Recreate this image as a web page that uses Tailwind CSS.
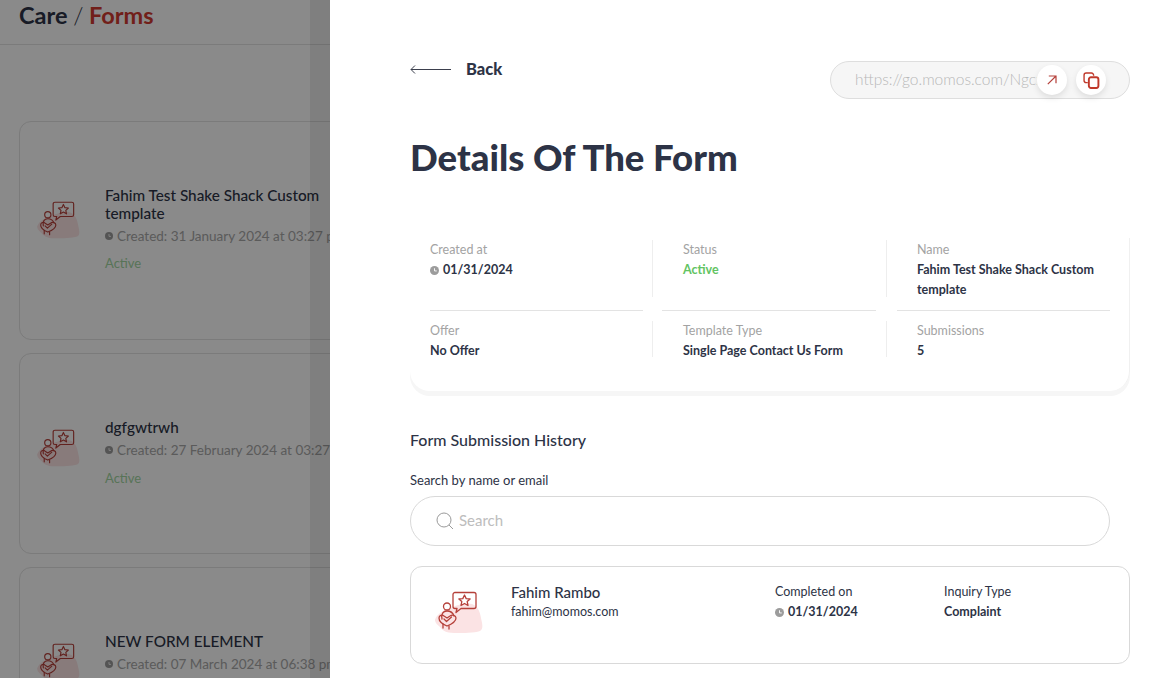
<!DOCTYPE html>
<html lang="en">
<head>
    <meta charset="UTF-8">
    <meta name="viewport" content="width=device-width, initial-scale=1.0">
    <title>Care / Forms</title>
    <script src="https://cdn.jsdelivr.net/npm/@tailwindcss/browser@4"></script>
</head>
<body class="h-[678px] w-[1162px] overflow-hidden bg-white font-['Lato',sans-serif] text-[#2d3346]">
    <svg class="hidden">
        <symbol id="form-icon" viewBox="0 0 50 46">
            <path d="M1 30c1-4 5-8 12-11 8-3 18-7 25-5 6 2 8 8 9 14 1 5 3 11-1 13-6 2-16 2-26 2-8 0-12-3-14-6-2-2-5-4-5-7z" fill="#fbe3e4"/>
            <g fill="none" stroke="#b5403a" stroke-width="1.300" stroke-linejoin="round" stroke-linecap="round">
                <path d="M21 2.500h19a2 2 0 0 1 2 2v12a2 2 0 0 1-2 2H27l-5 4 1-4h-2a2 2 0 0 1-2-2v-12a2 2 0 0 1 2-2z"/>
                <path d="M30.500 5l1.700 3.600 3.900.4-2.900 2.600.8 3.900-3.500-2-3.500 2 .8-3.900-2.900-2.600 3.900-.4z"/>
                <circle cx="13" cy="16.500" r="3.500"/>
                <path d="M8 29c-1-5 1-8 5-8s6 2 7 5"/>
                <path d="M13 36c-5-2-8-5-8-8 0-2.500 3-4 5-2l3 2 3-2c2-1.500 6-1 6 2 0 3-4 6-9 8z"/>
                <path d="M10 29l2.500 2.500 5-4.500"/>
                <path d="M9 34v4M15 36v3"/>
            </g>
        </symbol>
        <symbol id="clock" viewBox="0 0 10 10">
            <circle cx="5" cy="5" r="5" fill="#9c9c9c"/>
            <path d="M5 2.500V5.500H7.500" fill="none" stroke="#ffffff" stroke-width="1"/>
        </symbol>
    </svg>

    <div class="flex h-full">
        <!-- Forms list behind the overlay -->
        <div class="relative h-full w-[330px] shrink-0 overflow-hidden bg-white">
            <div class="flex h-[45px] w-[500px] items-start border-b border-[#e3e3e3] pl-[19px]">
                <h1 class="text-[23.5px] leading-[31px] font-bold text-[#2d3346]">Care <span class="font-light">/</span> <span class="text-[#d13a30]">Forms</span></h1>
            </div>
            <div class="ml-[19px] mt-[76px] flex w-[500px] flex-col gap-[13px]">
                <div class="flex h-[219px] items-center rounded-xl border border-[#e3e3e3] pl-[16px]">
                    <svg class="mb-[3px] h-[41px] w-[45px] shrink-0 self-center -translate-y-[9px]"><use href="#form-icon"/></svg>
                    <div class="mb-[3px] ml-[24px] w-[222px] shrink-0">
                        <p class="text-[15.3px] leading-[18px] font-medium text-[#2d3346]">Fahim Test Shake Shack Custom template</p>
                        <p class="mt-[5px] flex items-center gap-1 whitespace-nowrap text-[13.500px] leading-[18px] text-[#a8a8a8]"><svg class="size-2 shrink-0"><use href="#clock"/></svg>Created: 31 January 2024 at 03:27 pm</p>
                        <p class="mt-[9px] text-[13px] leading-[18px] text-[#a2d6a2]">Active</p>
                    </div>
                </div>
                <div class="flex h-[201px] items-center rounded-xl border border-[#e3e3e3] pl-[16px]">
                    <svg class="mb-[3px] h-[41px] w-[45px] shrink-0 -translate-y-[4px]"><use href="#form-icon"/></svg>
                    <div class="mb-[3px] ml-[24px] w-[222px] shrink-0">
                        <p class="text-[15.3px] leading-[18px] font-medium text-[#2d3346]">dgfgwtrwh</p>
                        <p class="mt-[5px] flex items-center gap-1 whitespace-nowrap text-[13.500px] leading-[18px] text-[#a8a8a8]"><svg class="size-2 shrink-0"><use href="#clock"/></svg>Created: 27 February 2024 at 03:27 pm</p>
                        <p class="mt-[10px] text-[13px] leading-[18px] text-[#a2d6a2]">Active</p>
                    </div>
                </div>
                <div class="flex h-[201px] items-center rounded-xl border border-[#e3e3e3] pl-[16px]">
                    <svg class="mb-[3px] h-[41px] w-[45px] shrink-0 -translate-y-[4px]"><use href="#form-icon"/></svg>
                    <div class="mb-[3px] ml-[24px] w-[222px] shrink-0">
                        <p class="text-[15.3px] leading-[18px] font-medium text-[#2d3346]">NEW FORM ELEMENT</p>
                        <p class="mt-[5px] flex items-center gap-1 whitespace-nowrap text-[13.500px] leading-[18px] text-[#a8a8a8]"><svg class="size-2 shrink-0"><use href="#clock"/></svg>Created: 07 March 2024 at 06:38 pm</p>
                        <p class="mt-[10px] text-[13px] leading-[18px] text-[#a2d6a2]">Active</p>
                    </div>
                </div>
            </div>
            <!-- Modal backdrop -->
            <div class="absolute inset-0 bg-black/46"></div>
            <div class="absolute inset-y-0 right-0 w-5 bg-black/8"></div>
        </div>

        <!-- Details panel -->
        <div class="h-full flex-1 overflow-hidden pl-20 pr-8">
            <div class="flex items-start justify-between pt-[61px]">
                <div class="flex items-center">
                    <svg class="h-3 w-[41px]" viewBox="0 0 41 12" fill="none" stroke="#3b3f4d" stroke-width="1"><path d="M41 6.500H1M5 2.500 1 6.500l4 4"/></svg>
                    <span class="ml-[15px] text-[16.500px] leading-4 font-black">Back</span>
                </div>
                <div class="flex h-[38px] w-[300px] items-center rounded-full border border-[#dedede] bg-[#f6f6f6] pl-6 pr-[23px]">
                    <span class="w-[182px] overflow-hidden whitespace-nowrap text-[15.500px] font-light text-[#b8b8b8]">https://go.momos.com/NgcxQd</span>
                    <button class="flex size-[30px] items-center justify-center rounded-full bg-white shadow-[0_3px_6px_rgba(0,0,0,0.1)]">
                        <svg class="size-[10px]" viewBox="0 0 10 10" fill="none" stroke="#b5403a" stroke-width="1.200"><path d="M.8 9.200 9 1M1.800 1H9v7.200"/></svg>
                    </button>
                    <button class="ml-[9px] flex size-[30px] items-center justify-center rounded-full bg-white shadow-[0_3px_6px_rgba(0,0,0,0.1)]">
                        <svg class="size-[17px]" viewBox="0 0 16 16" fill="none" stroke="#c0392b" stroke-width="1.300"><path d="M10 3.500V3a2 2 0 0 0-2-2H3a2 2 0 0 0-2 2v5a2 2 0 0 0 2 2h1.500"/><rect x="5.500" y="5" width="9" height="10" rx="2" stroke-width="1.800"/></svg>
                    </button>
                </div>
            </div>

            <h2 class="mt-[39px] text-[36.500px] leading-[38px] font-black">Details Of The Form</h2>

            <!-- Form info -->
            <div class="mt-[62px] h-[153px] rounded-b-[20px] border-r border-[#f0f0f0] pt-[2px] shadow-[0_5px_0_#f6f6f6]">
                <div class="grid grid-cols-[243px_234px_243px] text-[12.500px] leading-5">
                    <div class="h-[57px] border-r border-[#eeeeee] pl-5">
                        <p class="text-[#a3a3a3]">Created at</p>
                        <p class="flex items-center gap-1 font-bold"><svg class="size-[9px] shrink-0"><use href="#clock"/></svg>01/31/2024</p>
                    </div>
                    <div class="h-[57px] border-r border-[#eeeeee] pl-[30px]">
                        <p class="text-[#a3a3a3]">Status</p>
                        <p class="font-bold text-[#62c462]">Active</p>
                    </div>
                    <div class="h-[57px] pl-[30px] pr-3">
                        <p class="text-[#a3a3a3]">Name</p>
                        <p class="font-bold">Fahim Test Shake Shack Custom template</p>
                    </div>
                    <div class="col-span-3 flex h-[24px] items-center pl-5 pt-[2px]">
                        <div class="h-px w-[213px] bg-[#e3e3e3]"></div>
                        <div class="ml-[19px] h-px w-[214px] bg-[#e3e3e3]"></div>
                        <div class="ml-[21px] h-px w-[213px] bg-[#e3e3e3]"></div>
                    </div>
                    <div class="h-[36px] border-r border-[#eeeeee] pl-5">
                        <p class="text-[#a3a3a3]">Offer</p>
                        <p class="font-bold">No Offer</p>
                    </div>
                    <div class="h-[36px] border-r border-[#eeeeee] pl-[30px]">
                        <p class="text-[#a3a3a3]">Template Type</p>
                        <p class="font-bold">Single Page Contact Us Form</p>
                    </div>
                    <div class="h-[36px] pl-[30px]">
                        <p class="text-[#a3a3a3]">Submissions</p>
                        <p class="font-bold">5</p>
                    </div>
                </div>
            </div>

            <!-- Submission history -->
            <h3 class="mt-[38px] text-base leading-[22px] font-medium">Form Submission History</h3>
            <p class="mt-[19px] text-[13px] leading-[20px]">Search by name or email</p>
            <div class="mt-[6px] flex h-[50px] w-[700px] items-center rounded-full border border-[#d9d9d9] pl-[25px]">
                <svg class="size-[18px]" viewBox="0 0 18 18" fill="none" stroke="#9a9a9a" stroke-width="1"><circle cx="8" cy="8" r="7"/><path d="m13 13 4 4"/></svg>
                <span class="mb-[2px] ml-[5px] text-[15px] text-[#bdbdbd]">Search</span>
            </div>
            <div class="mt-[20px] flex h-[98px] rounded-xl border border-[#d9d9d9] pl-[23px] pt-[15px]">
                <svg class="mt-2 h-[46px] w-[50px] shrink-0"><use href="#form-icon"/></svg>
                <div class="ml-[27px] w-[264px] text-[12.500px] leading-5">
                    <p class="text-[15px] font-medium">Fahim Rambo</p>
                    <p>fahim@momos.com</p>
                </div>
                <div class="w-[169px] text-[12.500px] leading-5">
                    <p>Completed on</p>
                    <p class="flex items-center gap-1 font-bold"><svg class="size-[9px] shrink-0"><use href="#clock"/></svg>01/31/2024</p>
                </div>
                <div class="text-[12.500px] leading-5">
                    <p>Inquiry Type</p>
                    <p class="font-bold">Complaint</p>
                </div>
            </div>
        </div>
    </div>
</body>
</html>
